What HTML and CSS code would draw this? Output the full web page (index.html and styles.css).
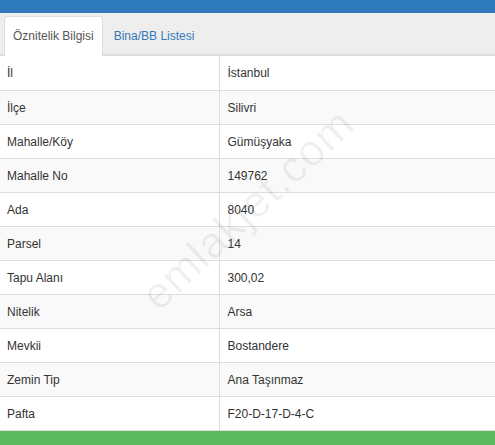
FILE: index.html
```html
<!DOCTYPE html>
<html lang="tr">
<head>
    <meta charset="UTF-8">
    <title>Öznitelik Bilgisi</title>
    <link rel="stylesheet" href="styles.css">
</head>
<body>
    <div class="topbar"></div>
    <div class="tabs">
        <div class="tab active">Öznitelik Bilgisi</div>
        <div class="tab">Bina/BB Listesi</div>
    </div>
    <div class="panel">
        <table class="info-table">
            <tr><td>İl</td><td>İstanbul</td></tr>
            <tr><td>İlçe</td><td>Silivri</td></tr>
            <tr><td>Mahalle/Köy</td><td>Gümüşyaka</td></tr>
            <tr><td>Mahalle No</td><td>149762</td></tr>
            <tr><td>Ada</td><td>8040</td></tr>
            <tr><td>Parsel</td><td>14</td></tr>
            <tr><td>Tapu Alanı</td><td>300,02</td></tr>
            <tr><td>Nitelik</td><td>Arsa</td></tr>
            <tr><td>Mevkii</td><td>Bostandere</td></tr>
            <tr><td>Zemin Tip</td><td>Ana Taşınmaz</td></tr>
            <tr><td>Pafta</td><td>F20-D-17-D-4-C</td></tr>
        </table>
        <div class="watermark">emlakjet.com</div>
    </div>
    <div class="footer-bar"></div>
</body>
</html>
```

FILE: styles.css
```css
body {
    margin: 0;
    font-family: "Liberation Sans", Arial, sans-serif;
    font-size: 12px;
    color: #333;
    background: #fff;
    overflow: hidden;
}

.topbar {
    height: 13px;
    background: #2f7bbd;
}

.tabs {
    display: flex;
    align-items: flex-end;
    height: 41px;
    padding-left: 4px;
    background: #eee;
    border-bottom: 2px solid #ddd;
}

.tab {
    height: 37px;
    line-height: 34px;
    padding: 0 8px;
    margin-right: 2px;
    margin-bottom: -2px;
    color: #337ab7;
    border: 1px solid transparent;
    border-bottom: none;
    border-radius: 3px 3px 0 0;
}

.tab.active {
    height: 39px;
    line-height: 38px;
    color: #555;
    background: #fff;
    border-color: #ddd;
}

.panel {
    position: relative;
    overflow: hidden;
}

.info-table {
    width: 100%;
    border-collapse: collapse;
}

.info-table td {
    box-sizing: border-box;
    height: 34px;
    padding: 1px 7px 0 8px;
    border-top: 1px solid #ddd;
    vertical-align: middle;
}

.info-table tr:first-child td {
    border-top: none;
}

.info-table td:first-child {
    width: 219px;
    padding-left: 7px;
    border-right: 1px solid #ddd;
}

.info-table tr:nth-child(even) td {
    background: #f9f9f9;
}

.watermark {
    position: absolute;
    left: 112px;
    top: 128px;
    font-size: 44px;
    letter-spacing: 1px;
    color: rgba(0, 0, 0, 0.06);
    transform: rotate(-43deg);
    pointer-events: none;
}

.footer-bar {
    height: 14px;
    border-top: 1px solid #ddd;
    background: #5cb85c;
}
```
